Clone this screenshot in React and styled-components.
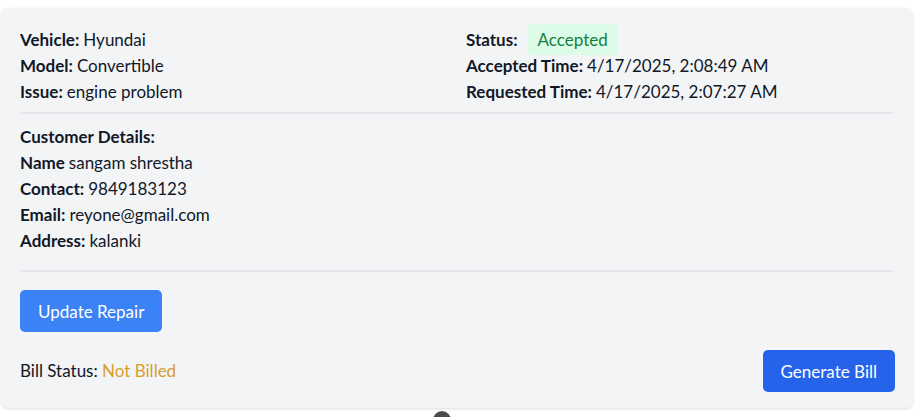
import React from 'react';
import styled, { createGlobalStyle } from 'styled-components';

const GlobalStyle = createGlobalStyle`
  body {
    margin: 0;
    background: #ffffff;
    font-family: "Segoe UI", Lato, "Noto Sans", sans-serif;
    color: #111827;
  }
`;

const Page = styled.div`
  padding: 8px 5px 0 1px;
`;

const Card = styled.div`
  background: #f3f4f6;
  border-radius: 8px;
  box-shadow: 0 1px 3px rgba(0, 0, 0, 0.15);
  padding: 19px 18px 16px 19px;
  font-size: 17px;
`;

const TopGrid = styled.div`
  display: grid;
  grid-template-columns: 1fr 1fr;
  column-gap: 17px;
`;

const Line = styled.div`
  line-height: 26px;
  display: flex;
  align-items: center;
  white-space: nowrap;
`;

const Label = styled.span`
  font-weight: 700;
  margin-right: ${(p) => (p.$wide ? '8px' : '4px')};
`;

const Badge = styled.span`
  background: #dcfce7;
  color: #15803d;
  border-radius: 4px;
  padding: 0 10px;
  height: 31px;
  line-height: 31px;
  margin: -3px 0 -2px 2px;
`;

const Divider = styled.hr`
  border: none;
  border-top: 2px solid #e5e7eb;
  margin: ${(p) => p.$margin || '7px 2px 10px 0'};
`;

const Heading = styled.div`
  font-weight: 700;
  line-height: 26px;
`;

const Button = styled.button`
  font-family: inherit;
  font-size: 17px;
  color: #ffffff;
  background: ${(p) => (p.$dark ? '#2563eb' : '#3b82f6')};
  border: none;
  border-radius: 5px;
  padding: 0 18px;
  height: 42px;
  cursor: pointer;
`;

const BottomRow = styled.div`
  display: flex;
  justify-content: space-between;
  align-items: center;
  margin-top: 18px;
`;

const BillStatus = styled.div`
  line-height: 26px;
`;

const NotBilled = styled.span`
  color: #d69e2e;
`;

const Peek = styled.div`
  width: 18px;
  height: 18px;
  border-radius: 50%;
  background: #4b4b4b;
  margin: 3px 0 0 432px;
`;

export default function App() {
  return (
    <Page>
      <GlobalStyle />
      <Card>
        <TopGrid>
          <div>
            <Line><Label>Vehicle:</Label>Hyundai</Line>
            <Line><Label>Model:</Label>Convertible</Line>
            <Line><Label>Issue:</Label>engine problem</Line>
          </div>
          <div>
            <Line><Label $wide>Status:</Label><Badge>Accepted</Badge></Line>
            <Line><Label>Accepted Time:</Label>4/17/2025, 2:08:49 AM</Line>
            <Line><Label>Requested Time:</Label>4/17/2025, 2:07:27 AM</Line>
          </div>
        </TopGrid>
        <Divider />
        <Heading>Customer Details:</Heading>
        <Line><Label>Name</Label>sangam shrestha</Line>
        <Line><Label>Contact:</Label>9849183123</Line>
        <Line><Label>Email:</Label>reyone@gmail.com</Line>
        <Line><Label>Address:</Label>kalanki</Line>
        <Divider $margin="16px 2px 18px 0" />
        <Button>Update Repair</Button>
        <BottomRow>
          <BillStatus>Bill Status: <NotBilled>Not Billed</NotBilled></BillStatus>
          <Button $dark>Generate Bill</Button>
        </BottomRow>
      </Card>
      <Peek />
    </Page>
  );
}
